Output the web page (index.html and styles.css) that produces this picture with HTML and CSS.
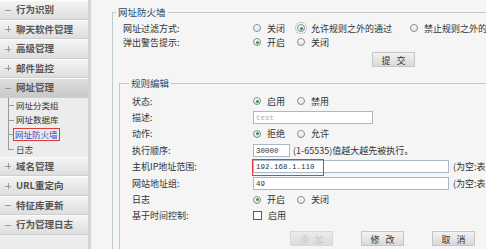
FILE: index.html
```html
<html>
<head>
<meta content="text/html;charset=utf-8" http-equiv="Content-Type" />
<link rel="stylesheet" href="styles.css">
</head>
<body>
<div class="page">
	<div class="side">
		<div class="menu"><span class="ico minus"></span>行为识别</div>
		<div class="menu"><span class="ico plus"></span>聊天软件管理</div>
		<div class="menu"><span class="ico plus"></span>高级管理</div>
		<div class="menu"><span class="ico plus"></span>邮件监控</div>
		<div class="menu open"><span class="ico minus"></span>网址管理</div>
		<ul class="sub">
			<li>网址分类组</li>
			<li>网址数据库</li>
			<li class="cur"><span>网址防火墙</span></li>
			<li class="last">日志</li>
		</ul>
		<div class="menu"><span class="ico plus"></span>域名管理</div>
		<div class="menu"><span class="ico plus"></span>URL重定向</div>
		<div class="menu"><span class="ico minus"></span>特征库更新</div>
		<div class="menu"><span class="ico minus"></span>行为管理日志</div>
	</div>
	<div class="main">
		<fieldset class="box">
			<legend>网址防火墙</legend>
			<div class="row">
				<span class="lbl">网址过滤方式:</span>
				<span class="opt"><span class="radio"></span>关闭</span>
				<span class="opt long"><span class="radio on focus"></span>允许规则之外的通过</span>
				<span class="opt"><span class="radio"></span>禁止规则之外的通过</span>
			</div>
			<div class="row">
				<span class="lbl">弹出警告提示:</span>
				<span class="opt"><span class="radio on"></span>开启</span>
				<span class="opt"><span class="radio"></span>关闭</span>
			</div>
			<div class="submit-row">
				<span class="btn">提&nbsp;&nbsp;&nbsp;交</span>
			</div>

			<fieldset class="edit">
				<legend>规则编辑</legend>
				<div class="erow">
					<span class="lbl">状态:</span>
					<span class="opt"><span class="radio on"></span>启用</span>
					<span class="opt"><span class="radio"></span>禁用</span>
				</div>
				<div class="erow">
					<span class="lbl">描述:</span>
					<span class="field desc ph">test</span>
				</div>
				<div class="erow">
					<span class="lbl">动作:</span>
					<span class="opt"><span class="radio on"></span>拒绝</span>
					<span class="opt"><span class="radio"></span>允许</span>
				</div>
				<div class="erow">
					<span class="lbl">执行顺序:</span>
					<span class="field order">30000</span>
					<span class="hint">(1-65535)值越大越先被执行。</span>
				</div>
				<div class="erow">
					<span class="lbl">主机IP地址范围:</span>
					<span class="field wide">192.168.1.110<span class="mark"></span></span>
					<span class="hint">(为空:表示所有主机)</span>
				</div>
				<div class="erow">
					<span class="lbl">网站地址组:</span>
					<span class="field wide">49</span>
					<span class="hint">(为空:表示所有网址)</span>
				</div>
				<div class="erow">
					<span class="lbl">日志</span>
					<span class="opt"><span class="radio on"></span>开启</span>
					<span class="opt"><span class="radio"></span>关闭</span>
				</div>
				<div class="erow">
					<span class="lbl">基于时间控制:</span>
					<span class="opt"><span class="check"></span>启用</span>
				</div>
				<div class="btn-row">
					<span class="btn off">添&nbsp;&nbsp;&nbsp;加</span>
					<span class="btn">修&nbsp;&nbsp;&nbsp;改</span>
					<span class="btn">取&nbsp;&nbsp;&nbsp;消</span>
				</div>
			</fieldset>
		</fieldset>
	</div>
</div>
</body>
</html>
```

FILE: styles.css
```css
body {
	margin:0;
	padding:0;
	width:486px;
	height:249px;
	overflow:hidden;
	background-color:#f5f5f5;
	color:#333;
	font-family:"Noto Sans CJK SC", "Liberation Sans", sans-serif;
	font-size:9px;
	white-space:nowrap;
}

.page {
	display:flex;
	height:249px;
}

/* left menu */
.side {
	width:88px;
	flex:none;
	background-color:#ececec;
	border-right:3px solid #d4d4d4;
}
.menu {
	height:17.5px;
	line-height:17.5px;
	padding-left:5px;
	border-top:1px solid #fbfbfb;
	border-bottom:1px solid #cfcfcf;
	background:linear-gradient(#f4f4f4, #dedede);
	font-size:9.5px;
	font-weight:bold;
	color:#555;
	display:flex;
	align-items:center;
}
.menu.open {
	background:linear-gradient(#dedede, #c8c8c8);
}
.ico {
	position:relative;
	width:6px;
	height:6px;
	margin-right:5px;
	flex:none;
}
.ico::before {
	content:"";
	position:absolute;
	left:0;
	top:3px;
	width:6px;
	border-top:1px solid #9a9a9a;
}
.ico.plus::after {
	content:"";
	position:absolute;
	left:3px;
	top:0;
	height:6px;
	border-left:1px solid #9a9a9a;
}

.sub {
	list-style:none;
	margin:0;
	padding:0;
}
.sub li {
	position:relative;
	height:14.75px;
	line-height:14.75px;
	padding-left:16px;
	font-size:8.5px;
	color:#333;
}
.sub li::before {
	content:"";
	position:absolute;
	left:8px;
	top:0;
	bottom:0;
	border-left:1px solid #9a9a9a;
}
.sub li::after {
	content:"";
	position:absolute;
	left:8px;
	top:50%;
	width:6px;
	border-top:1px solid #9a9a9a;
}
.sub li.last::before {
	bottom:50%;
}
.sub li.cur span {
	color:#2a4fc0;
	border:1px solid #e03a3a;
	padding:0 1px;
	margin-left:-3px;
	line-height:11px;
	display:inline-block;
}

/* content */
.main {
	flex:1;
	min-width:0;
	padding:6px 0 0 21px;
	overflow:hidden;
}
fieldset {
	margin:0;
	border:1px solid #bccaca;
}
legend {
	font-size:9.5px;
	line-height:12px;
	color:#2c4766;
	padding:0 2px;
}
.box {
	width:440px;
	padding:3px 0 20px 10px;
}
.box > legend {
	margin-left:-7px;
}
.row {
	display:flex;
	align-items:center;
	height:14px;
}
.row .lbl {
	width:130px;
	flex:none;
}
.opt {
	display:flex;
	align-items:center;
	min-width:44px;
}
.opt.long {
	margin-right:18px;
}
.radio {
	position:relative;
	width:8px;
	height:8px;
	box-sizing:border-box;
	border:1px solid #7d8d9d;
	border-radius:50%;
	background:linear-gradient(#ffffff, #e2e2e2);
	margin-right:6px;
	flex:none;
}
.radio.on::after {
	content:"";
	position:absolute;
	left:1.5px;
	top:1.5px;
	width:3px;
	height:3px;
	border-radius:50%;
	background-color:#2f9a3a;
}
.radio.focus {
	outline:1px dotted #8aa08a;
	outline-offset:1px;
}
.check {
	width:9px;
	height:9px;
	box-sizing:border-box;
	border:1px solid #4c5c6c;
	background-color:#fff;
	margin-right:6px;
	flex:none;
}

.submit-row {
	padding:3px 0 0 249px;
	height:15px;
}
.btn {
	display:inline-block;
	width:43px;
	height:15px;
	line-height:15px;
	box-sizing:border-box;
	text-align:center;
	border:1px solid #c6c6c6;
	background:linear-gradient(#f2f2f2, #d9d9d9);
	color:#333;
}
.btn.off {
	color:#c8c8c8;
	background:linear-gradient(#ececec, #dcdcdc);
	border-color:#d8d8d8;
}

.edit {
	margin:10px 0 0 -4px;
	padding:4px 0 20px 12px;
	border-right:0;
}
.edit > legend {
	margin-left:-3px;
}
.erow {
	display:flex;
	align-items:center;
	height:16.4px;
}
.erow .lbl {
	width:121px;
	flex:none;
}
.field {
	position:relative;
	height:13px;
	line-height:12px;
	box-sizing:border-box;
	border:1px solid #a9b8c8;
	background-color:#fff;
	padding-left:2px;
	font-family:"Liberation Mono", monospace;
	font-size:7.5px;
	color:#333;
	flex:none;
}
.field.ph {
	color:#b0b0b0;
}
.desc {
	width:120px;
}
.order {
	width:37px;
	margin-right:3px;
}
.wide {
	width:196px;
	margin-right:4px;
}
.mark {
	position:absolute;
	left:-2px;
	top:-2px;
	width:70px;
	height:15px;
	border:1.5px solid #e03a3a;
}
.hint {
	color:#333;
}
.btn-row {
	display:flex;
	gap:28px;
	padding:7px 0 0 158px;
}
```
